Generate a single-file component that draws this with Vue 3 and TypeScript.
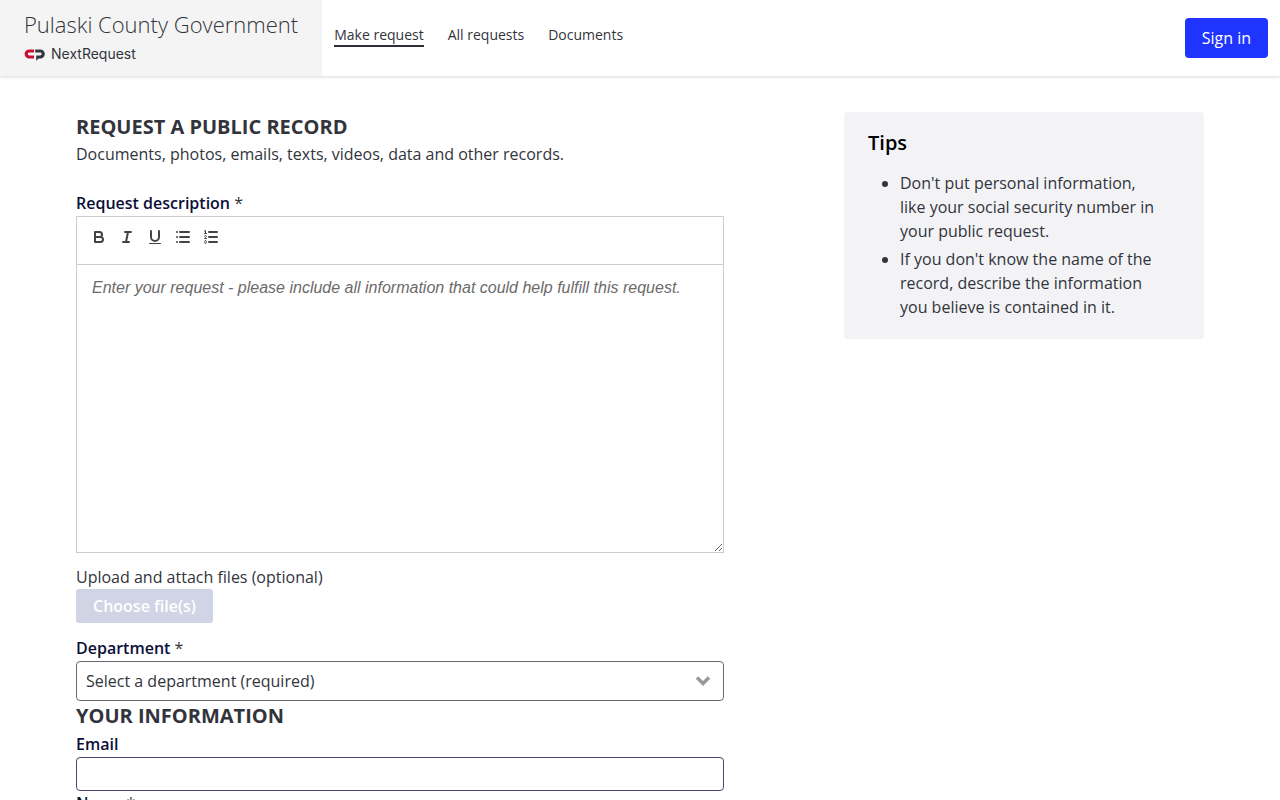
<script setup lang="ts">
import { ref } from 'vue'

const navItems: { label: string; active: boolean }[] = [
  { label: 'Make request', active: true },
  { label: 'All requests', active: false },
  { label: 'Documents', active: false },
]
const tips: string[] = [
  "Don't put personal information, like your social security number in your public request.",
  "If you don't know the name of the record, describe the information you believe is contained in it.",
]
const description = ref('')
const department = ref('')
const email = ref('')
const fullName = ref('')
</script>

<template>
  <div class="page">
    <header class="topbar">
      <a class="brand" href="#">
        <span class="agency">Pulaski County Government</span>
        <span class="product">
          <svg class="mark" viewBox="0 0 21 13" width="21" height="13" aria-hidden="true">
            <path d="M10 3H5.2a3 3 0 0 0 0 6H10" fill="none" stroke="#c8102e" stroke-width="3.2" />
            <path d="M11.2 1.4h5a4.6 4.6 0 0 1 0 9.2h-1.4l-2.6 2.2V7.4h4a1.4 1.4 0 0 0 0-2.8h-5z" fill="#33363d" />
          </svg>
          <span class="product-name">NextRequest</span>
        </span>
      </a>
      <nav class="nav">
        <a v-for="item in navItems" :key="item.label" href="#" :class="{ active: item.active }">{{ item.label }}</a>
      </nav>
      <button class="signin" type="button">Sign in</button>
    </header>

    <main class="content">
      <form class="form" @submit.prevent>
        <h1>Request a public record</h1>
        <p class="intro">Documents, photos, emails, texts, videos, data and other records.</p>

        <div class="label-row"><label for="description">Request description</label> *</div>
        <div class="editor">
          <div class="toolbar">
            <button type="button" aria-label="Bold">
              <svg viewBox="0 0 18 18"><path d="M5 4h4.5a2.5 2.5 0 0 1 0 5H5zM5 9h5.5a2.5 2.5 0 0 1 0 5H5z" /></svg>
            </button>
            <button type="button" aria-label="Italic">
              <svg viewBox="0 0 18 18"><path d="M7 4h6M5 14h6M8 14l2-10" /></svg>
            </button>
            <button type="button" aria-label="Underline">
              <svg viewBox="0 0 18 18"><path d="M5 3v6a4 4 0 0 0 8 0V3" /><rect class="fill" x="3" y="15" width="12" height="1" rx=".5" /></svg>
            </button>
            <button type="button" aria-label="Bulleted list">
              <svg viewBox="0 0 18 18"><path d="M6 4h9M6 9h9M6 14h9M3 4h.01M3 9h.01M3 14h.01" /></svg>
            </button>
            <button type="button" aria-label="Numbered list">
              <svg viewBox="0 0 18 18">
                <path d="M7 4h8M7 9h8M7 14h8" />
                <path class="thin" d="M2.5 5.5h2M2.5 3l1-.5v3" />
                <path class="thin" d="M4.5 10.5h-2c0-.234 1.85-1.076 1.85-2.234A.959.959 0 0 0 2.5 8.156" />
                <path class="thin" d="M2.5 14.846a.959.959 0 0 0 1.85-.109A.7.7 0 0 0 3.75 14a.688.688 0 0 0 .6-.736.959.959 0 0 0-1.85-.109" />
              </svg>
            </button>
          </div>
          <textarea id="description" v-model="description" placeholder="Enter your request - please include all information that could help fulfill this request."></textarea>
        </div>

        <p class="upload-label">Upload and attach files (optional)</p>
        <button class="choose" type="button" disabled>Choose file(s)</button>

        <div class="label-row department-label"><label for="department">Department</label> *</div>
        <div class="select-wrap">
          <select id="department" v-model="department">
            <option value="">Select a department (required)</option>
          </select>
          <svg class="chevron" viewBox="0 0 16 12" width="16" height="12" aria-hidden="true"><path d="M2 2.5l6 6 6-6" /></svg>
        </div>

        <h2>Your information</h2>
        <div class="label-row"><label for="email">Email</label></div>
        <input id="email" v-model="email" type="email" />
        <div class="label-row"><label for="name">Name</label> *</div>
        <input id="name" v-model="fullName" type="text" />
      </form>

      <aside class="tips">
        <h3>Tips</h3>
        <ul>
          <li v-for="tip in tips" :key="tip">{{ tip }}</li>
        </ul>
      </aside>
    </main>
  </div>
</template>

<style>
body {
  margin: 0;
  background: #fff;
}
</style>

<style scoped>
* {
  box-sizing: border-box;
}
.page {
  height: 100vh;
  overflow-y: auto;
  scrollbar-width: none;
  color: #32343c;
  font: 16px/24px "Open Sans", sans-serif;
}
h1, h2, h3, p, ul {
  margin: 0;
}
a {
  color: inherit;
  text-decoration: none;
}
button {
  border: 0;
  font: inherit;
}
.topbar {
  display: flex;
  height: 76px;
  box-shadow: 0 1px 3px rgba(0, 0, 0, 0.16);
}
.brand {
  display: flex;
  flex-direction: column;
  padding: 8px 24px 0;
  background: #f4f4f4;
}
.agency {
  font-size: 22px;
  font-weight: 300;
  line-height: 32px;
}
.product {
  display: flex;
  align-items: center;
  gap: 6px;
  height: 28px;
}
.product-name {
  font: 14px/20px Inter, "Liberation Sans", sans-serif;
}
.nav {
  display: flex;
  flex: 1;
  align-items: flex-start;
  gap: 24px;
  padding: 24px 12px 0;
  font-size: 14px;
  line-height: 21px;
}
.nav .active {
  border-bottom: 2px solid #2c2e38;
}
.signin {
  align-self: center;
  height: 40px;
  margin-right: 12px;
  padding: 0 17px;
  border-radius: 4px;
  background: #1f34ff;
  color: #fff;
  font-weight: 500;
}
.content {
  display: grid;
  grid-template-columns: 648fr 360fr;
  gap: 120px;
  align-items: start;
  max-width: 1128px;
  margin: 0 auto;
  padding-top: 36px;
}
h1, h2 {
  font-size: 20px;
  font-weight: 700;
  line-height: 30px;
  text-transform: uppercase;
}
h2 {
  margin-bottom: 1px;
}
.intro {
  margin-bottom: 25px;
}
label {
  color: #0b0f38;
  font-weight: 600;
}
.label-row {
  height: 25px;
}
.editor {
  border: 1px solid #ccc;
}
.toolbar {
  display: flex;
  height: 48px;
  padding: 8px;
  border-bottom: 1px solid #ccc;
}
.toolbar button {
  width: 28px;
  height: 24px;
  padding: 3px 5px;
  background: none;
}
.toolbar svg {
  display: block;
  width: 18px;
  height: 18px;
}
.toolbar path {
  fill: none;
  stroke: #444;
  stroke-width: 2;
  stroke-linecap: round;
  stroke-linejoin: round;
}
.toolbar .thin {
  stroke-width: 1;
}
.toolbar .fill {
  fill: #444;
}
textarea {
  display: block;
  width: 100%;
  height: 287px;
  padding: 12px 15px;
  border: 0;
  outline: 0;
  resize: vertical;
  font: 16px/22px "Liberation Sans", Arial, sans-serif;
}
textarea::placeholder {
  color: #6b6b6b;
  font-style: italic;
}
.upload-label {
  margin-top: 12px;
}
.choose {
  display: block;
  height: 34px;
  padding: 0 17px;
  border-radius: 3px;
  background: #d1d4e5;
  color: #fff;
  font-weight: 600;
}
.department-label {
  margin-top: 13px;
}
.select-wrap {
  position: relative;
}
select {
  display: block;
  width: 100%;
  height: 40px;
  padding: 0 9px;
  border: 1px solid #696974;
  border-radius: 4px;
  appearance: none;
  background: #fff;
  color: inherit;
  font: inherit;
}
.chevron {
  position: absolute;
  top: 14px;
  right: 13px;
  fill: none;
  stroke: #999;
  stroke-width: 3.5;
  pointer-events: none;
}
input {
  display: block;
  width: 100%;
  height: 34px;
  padding: 0 9px;
  border: 1px solid #454972;
  border-radius: 4px;
  font: inherit;
}
.tips {
  padding: 16px 48px 20px 24px;
  border-radius: 4px;
  background: #f3f3f6;
}
h3 {
  margin-bottom: 13px;
  color: #000;
  font-size: 20px;
  font-weight: 600;
  line-height: 30px;
}
ul {
  padding-left: 32px;
}
li + li {
  margin-top: 4px;
}
</style>
